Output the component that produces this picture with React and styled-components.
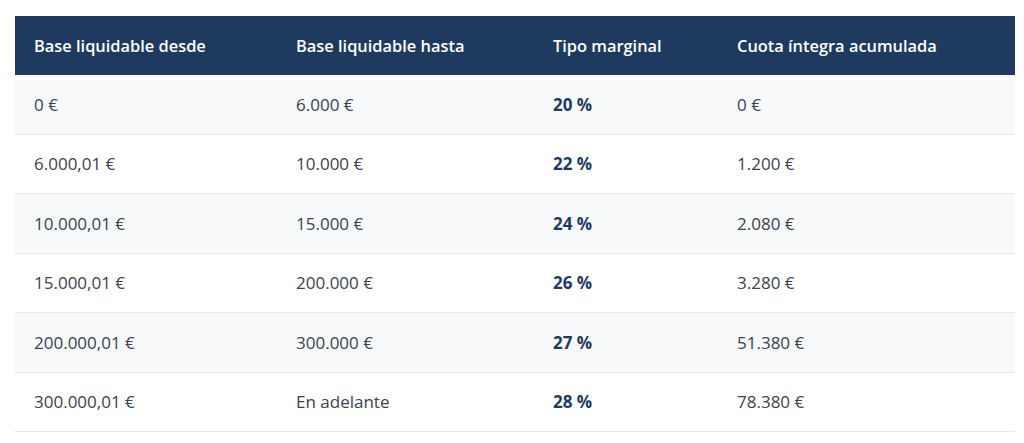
import styled, { createGlobalStyle } from "styled-components";

const GlobalStyle = createGlobalStyle`
  body {
    margin: 0;
    background: #ffffff;
    font-family: "Open Sans", "Liberation Sans", sans-serif;
  }
`;

const Wrapper = styled.div`
  padding: 16px 9px 0 15px;
`;

const Table = styled.table`
  width: 100%;
  border-collapse: collapse;
  table-layout: fixed;
  font-family: "Open Sans", "Liberation Sans", sans-serif;
`;

const HeadCell = styled.th`
  box-sizing: border-box;
  background: #1f3a5f;
  color: #ffffff;
  font-size: 16.4px;
  font-weight: 600;
  text-align: left;
  padding: 18.5px 19px 18.5px;
  line-height: 22px;
  white-space: nowrap;
  width: ${p => p.$width};
`;

const Row = styled.tr`
  background: ${p => (p.$striped ? "#f8f9fb" : "#ffffff")};
  border-bottom: 1px solid #e6e9ee;
`;

const Cell = styled.td`
  box-sizing: border-box;
  color: #3b4250;
  font-size: 17px;
  padding: 18.5px 19px 18px;
  line-height: 22px;
  white-space: nowrap;
  font-weight: ${p => (p.$strong ? 700 : 400)};
  ${p => p.$strong && "color: #1f3a5f;"}
`;

const columns = [
  { label: "Base liquidable desde", width: "262px" },
  { label: "Base liquidable hasta", width: "257px" },
  { label: "Tipo marginal", width: "184px" },
  { label: "Cuota íntegra acumulada", width: "auto" },
];

const brackets = [
  ["0 €", "6.000 €", "20 %", "0 €"],
  ["6.000,01 €", "10.000 €", "22 %", "1.200 €"],
  ["10.000,01 €", "15.000 €", "24 %", "2.080 €"],
  ["15.000,01 €", "200.000 €", "26 %", "3.280 €"],
  ["200.000,01 €", "300.000 €", "27 %", "51.380 €"],
  ["300.000,01 €", "En adelante", "28 %", "78.380 €"],
];

const App = () => {
  return (
    <>
      <GlobalStyle />
      <Wrapper>
        <Table>
          <thead>
            <tr>
              {columns.map(col => (
                <HeadCell key={col.label} $width={col.width}>
                  {col.label}
                </HeadCell>
              ))}
            </tr>
          </thead>
          <tbody>
            {brackets.map((row, index) => (
              <Row key={row[0]} $striped={index % 2 === 0}>
                <Cell>{row[0]}</Cell>
                <Cell>{row[1]}</Cell>
                <Cell $strong>{row[2]}</Cell>
                <Cell>{row[3]}</Cell>
              </Row>
            ))}
          </tbody>
        </Table>
      </Wrapper>
    </>
  );
};

export default App;
